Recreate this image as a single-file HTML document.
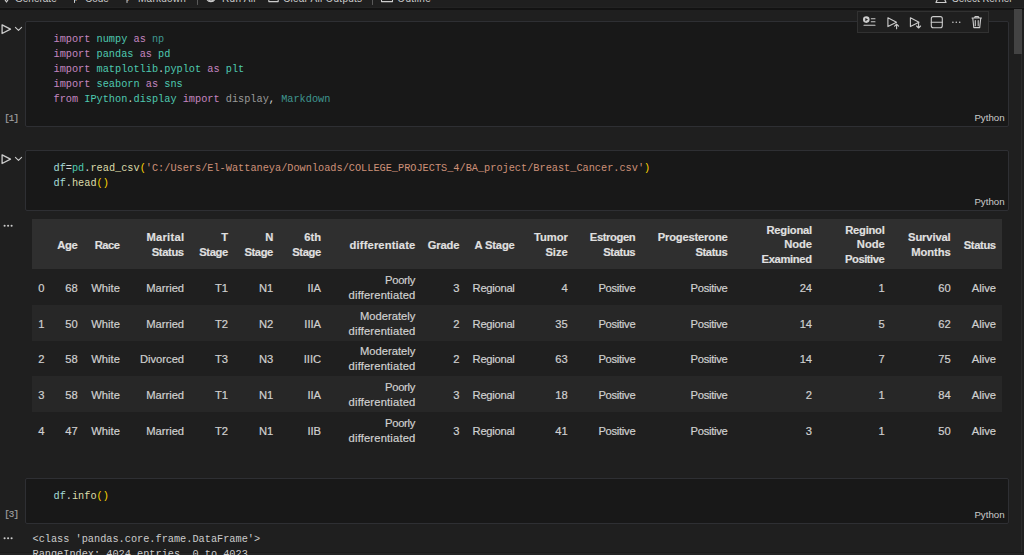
<!DOCTYPE html>
<html><head><meta charset="utf-8">
<style>
html,body{margin:0;padding:0;width:1024px;height:555px;overflow:hidden;background:#1f1f1f;position:relative}
*{box-sizing:border-box}
.a{position:absolute;white-space:pre;line-height:0}
.ui{font-family:"Liberation Sans",sans-serif}
.mono{font-family:"Liberation Mono",monospace}
.tb{font-size:10px;color:#cccccc;top:-1.5px}
.cell{position:absolute;left:25px;width:984px;background:#181818;border:1px solid #2e2f33;border-radius:2px}
.code{font-family:"Liberation Mono",monospace;font-size:10.25px;color:#d4d4d4;position:absolute;left:53.5px;white-space:pre;line-height:15.05px}
.kw{color:#c586c0}.cls{color:#4ec9b0}.fn{color:#dcdcaa}.var{color:#a6dcd8}.str{color:#ce9178}.br{color:#ffd700}
.fade-cls{color:#3f9690}.fade{color:#9a9a9a}
.lang{font-family:"Liberation Sans",sans-serif;font-size:9.7px;color:#cccccc;position:absolute;line-height:0;white-space:pre}
.cnt{font-family:"Liberation Mono",monospace;font-size:9.2px;color:#a0a0a0;position:absolute;line-height:0;left:4.2px;letter-spacing:-0.9px;-webkit-text-stroke:0.2px #a0a0a0}
.t{font-family:"Liberation Sans",sans-serif;font-size:11px;color:#cccccc;position:absolute;line-height:0;white-space:pre;text-align:right}
.tt.h{font-weight:bold;color:#e0e0e0;-webkit-text-stroke:0.15px #e0e0e0}
.tt{position:absolute;left:0;font-family:"Liberation Sans",sans-serif;font-size:11.2px;color:#d0d0d0;text-align:right;white-space:nowrap;-webkit-text-stroke:0.2px #d0d0d0}
</style></head><body>

<!-- top notebook toolbar -->
<div class="a" style="left:0;top:0;width:1024px;height:8px;background:#1f1f1f"></div>
<div class="a" style="left:0;top:7px;width:1024px;height:1px;background:#232323"></div>
<div class="a" style="left:0;top:8px;width:1024px;height:2px;background:#131313"></div>

<span class="a ui tb" style="left:15px">Generate</span>
<span class="a ui tb" style="left:73px">+</span>
<span class="a ui tb" style="left:85px">Code</span>
<span class="a ui tb" style="left:125px">+</span>
<span class="a ui tb" style="left:138px;letter-spacing:0.25px">Markdown</span>
<div class="a" style="left:197px;top:0;width:1px;height:5px;background:#555"></div>
<span class="a ui tb" style="left:222px;letter-spacing:0.3px">Run All</span>
<span class="a ui tb" style="left:283px;letter-spacing:0.25px">Clear All Outputs</span>
<div class="a" style="left:372px;top:0;width:1px;height:5px;background:#555"></div>
<span class="a ui tb" style="left:397.3px;letter-spacing:0.3px">Outline</span>
<span class="a ui tb" style="left:952px">Select Kernel</span>

<div class="a" style="left:0;top:552px;width:1024px;height:1px;background:#1b1b1b"></div>
<div class="a" style="left:0;top:553px;width:1024px;height:2px;background:#232323"></div>
<!-- scrollbar -->
<div class="a" style="left:1014px;top:9px;width:8px;height:45px;background:#434343"></div>
<div class="a" style="left:1021px;top:54px;width:1px;height:498px;background:#2a2a2a"></div>

<!-- cell 1 -->
<div class="cell" style="top:21px;height:106px"></div>
<div class="code" style="top:31.8px"><span class="kw">import</span> <span class="cls">numpy</span> <span class="kw">as</span> <span class="fade-cls">np</span>
<span class="kw">import</span> <span class="cls">pandas</span> <span class="kw">as</span> <span class="cls">pd</span>
<span class="kw">import</span> <span class="cls">matplotlib</span>.<span class="cls">pyplot</span> <span class="kw">as</span> <span class="cls">plt</span>
<span class="kw">import</span> <span class="cls">seaborn</span> <span class="kw">as</span> <span class="cls">sns</span>
<span class="kw">from</span> <span class="cls">IPython</span>.<span class="cls">display</span> <span class="kw">import</span> <span class="fade">display</span>, <span class="fade-cls">Markdown</span></div>
<span class="lang" style="left:974.4px;top:118px">Python</span>
<span class="cnt" style="top:118.5px">[1]</span>

<!-- cell 2 -->
<div class="cell" style="top:150px;height:61px"></div>
<div class="code" style="top:161.3px"><span class="var">df</span>=<span class="cls">pd</span>.<span class="fn">read_csv</span><span class="br">(</span><span class="str">'C:/Users/El-Wattaneya/Downloads/COLLEGE_PROJECTS_4/BA_project/Breast_Cancer.csv'</span><span class="br">)</span>
<span class="var">df</span>.<span class="fn">head</span><span class="br">()</span></div>
<span class="lang" style="left:974.4px;top:202px">Python</span>

<!-- table -->
<div class="a" style="left:32px;top:219px;width:970.3px;height:50px;background:#2f2f2f"></div>
<div class="a" style="left:32px;top:305px;width:970.3px;height:36px;background:#272727"></div>
<div class="a" style="left:32px;top:376px;width:970.3px;height:36px;background:#272727"></div>
<div class="tt h" style="width:77.8px;top:237.95px;line-height:14.5px"><span style="letter-spacing:-0.3px;margin-right:0.3px">Age</span></div>
<div class="tt h" style="width:119.9px;top:237.95px;line-height:14.5px"><span style="letter-spacing:-0.5px;margin-right:0.5px">Race</span></div>
<div class="tt h" style="width:184.1px;top:230.05px;line-height:14.5px"><span style="letter-spacing:0.27px;margin-right:-0.27px">Marital</span><br><span style="letter-spacing:-0.36px;margin-right:0.36px">Status</span></div>
<div class="tt h" style="width:228.1px;top:230.05px;line-height:14.5px">T<br><span style="letter-spacing:-0.42px;margin-right:0.42px">Stage</span></div>
<div class="tt h" style="width:273.3px;top:230.05px;line-height:14.5px">N<br><span style="letter-spacing:-0.42px;margin-right:0.42px">Stage</span></div>
<div class="tt h" style="width:321.1px;top:230.05px;line-height:14.5px">6th<br><span style="letter-spacing:-0.42px;margin-right:0.42px">Stage</span></div>
<div class="tt h" style="width:415.3px;top:237.95px;line-height:14.5px"><span style="letter-spacing:0.14px;margin-right:-0.14px">differentiate</span></div>
<div class="tt h" style="width:459.5px;top:237.95px;line-height:14.5px"><span style="letter-spacing:-0.15px;margin-right:0.15px">Grade</span></div>
<div class="tt h" style="width:514.8px;top:237.95px;line-height:14.5px"><span style="letter-spacing:-0.15px;margin-right:0.15px">A Stage</span></div>
<div class="tt h" style="width:567.8px;top:230.05px;line-height:14.5px"><span style="letter-spacing:-0.07px;margin-right:0.07px">Tumor</span><br>Size</div>
<div class="tt h" style="width:635.6px;top:230.05px;line-height:14.5px"><span style="letter-spacing:-0.39px;margin-right:0.39px">Estrogen</span><br><span style="letter-spacing:-0.36px;margin-right:0.36px">Status</span></div>
<div class="tt h" style="width:727.8px;top:230.05px;line-height:14.5px"><span style="letter-spacing:-0.19px;margin-right:0.19px">Progesterone</span><br><span style="letter-spacing:-0.36px;margin-right:0.36px">Status</span></div>
<div class="tt h" style="width:812.1px;top:222.95px;line-height:14.5px"><span style="letter-spacing:-0.24px;margin-right:0.24px">Regional</span><br>Node<br><span style="letter-spacing:-0.32px;margin-right:0.32px">Examined</span></div>
<div class="tt h" style="width:884.8px;top:222.95px;line-height:14.5px"><span style="letter-spacing:-0.24px;margin-right:0.24px">Reginol</span><br>Node<br><span style="letter-spacing:-0.44px;margin-right:0.44px">Positive</span></div>
<div class="tt h" style="width:950.7px;top:230.05px;line-height:14.5px"><span style="letter-spacing:-0.13px;margin-right:0.13px">Survival</span><br><span style="letter-spacing:-0.08px;margin-right:0.08px">Months</span></div>
<div class="tt h" style="width:996.1px;top:237.95px;line-height:14.5px"><span style="letter-spacing:-0.36px;margin-right:0.36px">Status</span></div>
<div class="tt" style="width:44.5px;top:280.75px;line-height:14.9px">0</div>
<div class="tt" style="width:77.8px;top:280.75px;line-height:14.9px">68</div>
<div class="tt" style="width:119.9px;top:280.75px;line-height:14.9px">White</div>
<div class="tt" style="width:184.1px;top:280.75px;line-height:14.9px">Married</div>
<div class="tt" style="width:228.1px;top:280.75px;line-height:14.9px">T1</div>
<div class="tt" style="width:273.3px;top:280.75px;line-height:14.9px">N1</div>
<div class="tt" style="width:321.1px;top:280.75px;line-height:14.9px">IIA</div>
<div class="tt" style="width:415.3px;top:272.95px;line-height:14.9px"><span style="letter-spacing:-0.3px;margin-right:0.3px">Poorly</span><br><span style="letter-spacing:0.17px;margin-right:-0.17px">differentiated</span></div>
<div class="tt" style="width:459.5px;top:280.75px;line-height:14.9px">3</div>
<div class="tt" style="width:514.8px;top:280.75px;line-height:14.9px"><span style="letter-spacing:-0.28px;margin-right:0.28px">Regional</span></div>
<div class="tt" style="width:567.8px;top:280.75px;line-height:14.9px">4</div>
<div class="tt" style="width:635.6px;top:280.75px;line-height:14.9px"><span style="letter-spacing:-0.28px;margin-right:0.28px">Positive</span></div>
<div class="tt" style="width:727.8px;top:280.75px;line-height:14.9px"><span style="letter-spacing:-0.28px;margin-right:0.28px">Positive</span></div>
<div class="tt" style="width:812.1px;top:280.75px;line-height:14.9px">24</div>
<div class="tt" style="width:884.8px;top:280.75px;line-height:14.9px">1</div>
<div class="tt" style="width:950.7px;top:280.75px;line-height:14.9px">60</div>
<div class="tt" style="width:996.1px;top:280.75px;line-height:14.9px">Alive</div>
<div class="tt" style="width:44.5px;top:316.50px;line-height:14.9px">1</div>
<div class="tt" style="width:77.8px;top:316.50px;line-height:14.9px">50</div>
<div class="tt" style="width:119.9px;top:316.50px;line-height:14.9px">White</div>
<div class="tt" style="width:184.1px;top:316.50px;line-height:14.9px">Married</div>
<div class="tt" style="width:228.1px;top:316.50px;line-height:14.9px">T2</div>
<div class="tt" style="width:273.3px;top:316.50px;line-height:14.9px">N2</div>
<div class="tt" style="width:321.1px;top:316.50px;line-height:14.9px">IIIA</div>
<div class="tt" style="width:415.3px;top:308.70px;line-height:14.9px">Moderately<br><span style="letter-spacing:0.17px;margin-right:-0.17px">differentiated</span></div>
<div class="tt" style="width:459.5px;top:316.50px;line-height:14.9px">2</div>
<div class="tt" style="width:514.8px;top:316.50px;line-height:14.9px"><span style="letter-spacing:-0.28px;margin-right:0.28px">Regional</span></div>
<div class="tt" style="width:567.8px;top:316.50px;line-height:14.9px">35</div>
<div class="tt" style="width:635.6px;top:316.50px;line-height:14.9px"><span style="letter-spacing:-0.28px;margin-right:0.28px">Positive</span></div>
<div class="tt" style="width:727.8px;top:316.50px;line-height:14.9px"><span style="letter-spacing:-0.28px;margin-right:0.28px">Positive</span></div>
<div class="tt" style="width:812.1px;top:316.50px;line-height:14.9px">14</div>
<div class="tt" style="width:884.8px;top:316.50px;line-height:14.9px">5</div>
<div class="tt" style="width:950.7px;top:316.50px;line-height:14.9px">62</div>
<div class="tt" style="width:996.1px;top:316.50px;line-height:14.9px">Alive</div>
<div class="tt" style="width:44.5px;top:352.25px;line-height:14.9px">2</div>
<div class="tt" style="width:77.8px;top:352.25px;line-height:14.9px">58</div>
<div class="tt" style="width:119.9px;top:352.25px;line-height:14.9px">White</div>
<div class="tt" style="width:184.1px;top:352.25px;line-height:14.9px">Divorced</div>
<div class="tt" style="width:228.1px;top:352.25px;line-height:14.9px">T3</div>
<div class="tt" style="width:273.3px;top:352.25px;line-height:14.9px">N3</div>
<div class="tt" style="width:321.1px;top:352.25px;line-height:14.9px">IIIC</div>
<div class="tt" style="width:415.3px;top:344.45px;line-height:14.9px">Moderately<br><span style="letter-spacing:0.17px;margin-right:-0.17px">differentiated</span></div>
<div class="tt" style="width:459.5px;top:352.25px;line-height:14.9px">2</div>
<div class="tt" style="width:514.8px;top:352.25px;line-height:14.9px"><span style="letter-spacing:-0.28px;margin-right:0.28px">Regional</span></div>
<div class="tt" style="width:567.8px;top:352.25px;line-height:14.9px">63</div>
<div class="tt" style="width:635.6px;top:352.25px;line-height:14.9px"><span style="letter-spacing:-0.28px;margin-right:0.28px">Positive</span></div>
<div class="tt" style="width:727.8px;top:352.25px;line-height:14.9px"><span style="letter-spacing:-0.28px;margin-right:0.28px">Positive</span></div>
<div class="tt" style="width:812.1px;top:352.25px;line-height:14.9px">14</div>
<div class="tt" style="width:884.8px;top:352.25px;line-height:14.9px">7</div>
<div class="tt" style="width:950.7px;top:352.25px;line-height:14.9px">75</div>
<div class="tt" style="width:996.1px;top:352.25px;line-height:14.9px">Alive</div>
<div class="tt" style="width:44.5px;top:388.00px;line-height:14.9px">3</div>
<div class="tt" style="width:77.8px;top:388.00px;line-height:14.9px">58</div>
<div class="tt" style="width:119.9px;top:388.00px;line-height:14.9px">White</div>
<div class="tt" style="width:184.1px;top:388.00px;line-height:14.9px">Married</div>
<div class="tt" style="width:228.1px;top:388.00px;line-height:14.9px">T1</div>
<div class="tt" style="width:273.3px;top:388.00px;line-height:14.9px">N1</div>
<div class="tt" style="width:321.1px;top:388.00px;line-height:14.9px">IIA</div>
<div class="tt" style="width:415.3px;top:380.20px;line-height:14.9px"><span style="letter-spacing:-0.3px;margin-right:0.3px">Poorly</span><br><span style="letter-spacing:0.17px;margin-right:-0.17px">differentiated</span></div>
<div class="tt" style="width:459.5px;top:388.00px;line-height:14.9px">3</div>
<div class="tt" style="width:514.8px;top:388.00px;line-height:14.9px"><span style="letter-spacing:-0.28px;margin-right:0.28px">Regional</span></div>
<div class="tt" style="width:567.8px;top:388.00px;line-height:14.9px">18</div>
<div class="tt" style="width:635.6px;top:388.00px;line-height:14.9px"><span style="letter-spacing:-0.28px;margin-right:0.28px">Positive</span></div>
<div class="tt" style="width:727.8px;top:388.00px;line-height:14.9px"><span style="letter-spacing:-0.28px;margin-right:0.28px">Positive</span></div>
<div class="tt" style="width:812.1px;top:388.00px;line-height:14.9px">2</div>
<div class="tt" style="width:884.8px;top:388.00px;line-height:14.9px">1</div>
<div class="tt" style="width:950.7px;top:388.00px;line-height:14.9px">84</div>
<div class="tt" style="width:996.1px;top:388.00px;line-height:14.9px">Alive</div>
<div class="tt" style="width:44.5px;top:423.75px;line-height:14.9px">4</div>
<div class="tt" style="width:77.8px;top:423.75px;line-height:14.9px">47</div>
<div class="tt" style="width:119.9px;top:423.75px;line-height:14.9px">White</div>
<div class="tt" style="width:184.1px;top:423.75px;line-height:14.9px">Married</div>
<div class="tt" style="width:228.1px;top:423.75px;line-height:14.9px">T2</div>
<div class="tt" style="width:273.3px;top:423.75px;line-height:14.9px">N1</div>
<div class="tt" style="width:321.1px;top:423.75px;line-height:14.9px">IIB</div>
<div class="tt" style="width:415.3px;top:415.95px;line-height:14.9px"><span style="letter-spacing:-0.3px;margin-right:0.3px">Poorly</span><br><span style="letter-spacing:0.17px;margin-right:-0.17px">differentiated</span></div>
<div class="tt" style="width:459.5px;top:423.75px;line-height:14.9px">3</div>
<div class="tt" style="width:514.8px;top:423.75px;line-height:14.9px"><span style="letter-spacing:-0.28px;margin-right:0.28px">Regional</span></div>
<div class="tt" style="width:567.8px;top:423.75px;line-height:14.9px">41</div>
<div class="tt" style="width:635.6px;top:423.75px;line-height:14.9px"><span style="letter-spacing:-0.28px;margin-right:0.28px">Positive</span></div>
<div class="tt" style="width:727.8px;top:423.75px;line-height:14.9px"><span style="letter-spacing:-0.28px;margin-right:0.28px">Positive</span></div>
<div class="tt" style="width:812.1px;top:423.75px;line-height:14.9px">3</div>
<div class="tt" style="width:884.8px;top:423.75px;line-height:14.9px">1</div>
<div class="tt" style="width:950.7px;top:423.75px;line-height:14.9px">50</div>
<div class="tt" style="width:996.1px;top:423.75px;line-height:14.9px">Alive</div>

<!-- cell 3 -->
<div class="cell" style="top:478px;height:46px"></div>
<div class="code" style="top:489.3px"><span class="var">df</span>.<span class="fn">info</span><span class="br">()</span></div>
<span class="lang" style="left:974.4px;top:515px">Python</span>
<span class="cnt" style="top:515px">[3]</span>

<!-- output text -->
<div class="code" style="left:32.5px;top:532.3px;color:#cccccc">&lt;class 'pandas.core.frame.DataFrame'&gt;
RangeIndex: 4024 entries, 0 to 4023</div>


<!-- icons overlay -->
<svg class="a" style="left:0;top:0;line-height:normal" width="1024" height="555" viewBox="0 0 1024 555" fill="none" stroke="#cccccc" stroke-linecap="round" stroke-linejoin="round">
 <!-- top bar icons (cut off) -->
 <path d="M4.5,-1 L6.5,2 L8.5,-1" stroke-width="1.2"/>
 <path d="M74.5,-2 V2.5" stroke-width="1"/>
 <path d="M127,-2 V2.5" stroke-width="1"/>
 <path d="M197.5,-2 V3.5" stroke="#5a5a5a" stroke-width="1"/>
 <path d="M206.6,-1.5 A4.5,4.5 0 0 0 215.2,-1.5" stroke-width="1.2"/>
 <path d="M208.8,0.3 Q211,1.8 213.2,0.3" stroke-width="1"/>
 <rect x="268.8" y="-3" width="9.4" height="4.6" stroke-width="1.1"/>
 <path d="M372.5,-2 V3.5" stroke="#5a5a5a" stroke-width="1"/>
 <rect x="381.5" y="-3" width="11" height="4.6" stroke-width="1.1"/>
 <path d="M936,2.5 H946 L944.5,-1 M936,2.5 L937.5,-1" stroke-width="1.2"/>
 <!-- cell 1 run -->
 <g id="run1">
 <path d="M2.1,24.9 V33.5 L10.5,29.2 Z" stroke-width="1.3"/>
 <path d="M15.4,27.4 L18.5,30.4 L21.6,27.4" stroke-width="1.1"/>
 </g>
 <!-- cell 2 run -->
 <g transform="translate(0,130)">
 <path d="M2.1,24.9 V33.5 L10.5,29.2 Z" stroke-width="1.3"/>
 <path d="M15.4,27.4 L18.5,30.4 L21.6,27.4" stroke-width="1.1"/>
 </g>
 <!-- output ellipsis -->
 <g fill="#cccccc" stroke="none">
  <circle cx="4.6" cy="225.8" r="1.05"/><circle cx="8.1" cy="225.8" r="1.05"/><circle cx="11.6" cy="225.8" r="1.05"/>
  <circle cx="4.6" cy="538.2" r="1.05"/><circle cx="8.1" cy="538.2" r="1.05"/><circle cx="11.6" cy="538.2" r="1.05"/>
 </g>
</svg>
<!-- floating cell toolbar -->
<div class="a" style="left:857px;top:11px;width:131.5px;height:22px;background:#1f1f1f;border:1px solid #313131"></div>
<svg class="a" style="left:0;top:0;line-height:normal" width="1024" height="40" viewBox="0 0 1024 40" fill="none" stroke="#cccccc" stroke-linecap="round" stroke-linejoin="round">
 <circle cx="866.3" cy="19.6" r="3.3" fill="#cccccc" stroke="none"/>
 <path d="M865.3,17.9 V21.3 L868,19.6 Z" fill="#1f1f1f" stroke="none"/>
 <path d="M871.3,18.7 H875 M871.3,21.8 H875 M864,25.2 H875" stroke-width="1.1"/>
 <path d="M887.9,17.8 V26.6 L896.5,22.2 Z" stroke-width="1.1"/>
 <path d="M896.6,24.3 V28.8 M894.6,26.2 L896.6,24.2 L898.6,26.2" stroke-width="1.1"/>
 <path d="M910.4,17.8 V26.6 L919,22.2 Z" stroke-width="1.1"/>
 <path d="M918.6,23.4 V28 M916.6,26 L918.6,28 L920.6,26" stroke-width="1.1"/>
 <rect x="931.3" y="16.6" width="11" height="11.2" rx="2" stroke-width="1.1"/>
 <path d="M931.3,22.3 H942.3" stroke-width="1.1"/>
 <g fill="#cccccc" stroke="none"><circle cx="952.9" cy="22.3" r="0.8"/><circle cx="956.3" cy="22.3" r="0.8"/><circle cx="959.7" cy="22.3" r="0.8"/></g>
 <path d="M972,18 H981.5 M974.5,18 L975,16.6 H978.4 L979,18 M972.8,18.5 L973.8,27.6 H979.7 L980.7,18.5 M975.3,20.5 V25.8 M978.2,20.5 V25.8" stroke-width="1.1"/>
</svg>

</body></html>
